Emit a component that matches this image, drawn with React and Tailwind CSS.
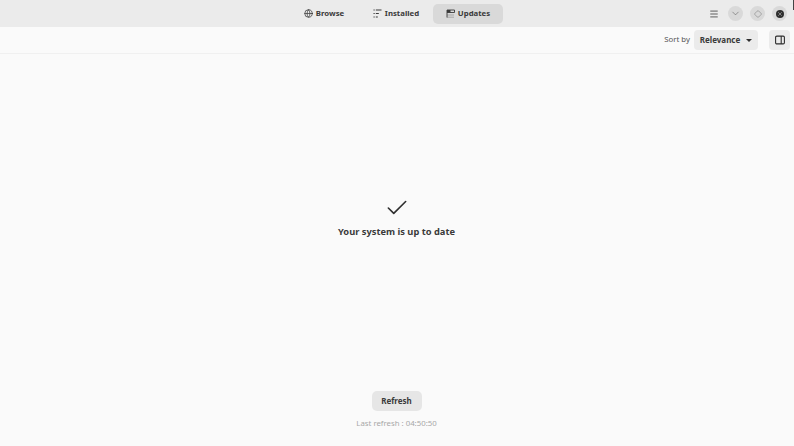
import { Check, ChevronDown, Diamond, Globe, Menu, X } from "lucide-react";

function InstalledIcon() {
  return (
    <svg width="9" height="9" viewBox="0 0 9 9" className="text-[#3a3a3a]">
      <path d="M0.5 1h1.2M2.8 1h5.7M0.5 4.5h1.2M2.8 4.5h3M0.5 8h1.2M2.8 8h2" stroke="currentColor" strokeWidth="1.1" fill="none" />
    </svg>
  );
}

function UpdatesIcon() {
  return (
    <svg width="9" height="9" viewBox="0 0 9 9" className="text-[#3a3a3a]">
      <path d="M1 8.5V1h7.5v2.5H1" stroke="currentColor" strokeWidth="0.9" fill="none" />
      <path d="M1 1h3.5v2.5H1z" fill="currentColor" />
      <path d="M1 6h7M1 8.2h7" stroke="currentColor" strokeWidth="0.6" opacity="0.5" />
    </svg>
  );
}

function SidebarIcon() {
  return (
    <svg width="10" height="10" viewBox="0 0 10 10" className="text-[#2e2e2e]">
      <rect x="0.6" y="1.1" width="8.8" height="7.8" rx="1.2" stroke="currentColor" strokeWidth="1.1" fill="none" />
      <path d="M6.2 1.1v7.8" stroke="currentColor" strokeWidth="1.1" />
    </svg>
  );
}

function Tab({ icon, label, active }) {
  return (
    <div className={`flex h-[20px] w-[70px] items-center justify-center gap-[3px] rounded-[5px] text-[7.8px] font-bold text-[#3a3a3a] ${active ? "bg-[#d9d9d9]" : ""}`}>
      {icon}
      <span>{label}</span>
    </div>
  );
}

function WindowButton({ children }) {
  return (
    <div className="flex h-[15px] w-[15px] items-center justify-center rounded-full bg-[#d9d9d9]">
      {children}
    </div>
  );
}

export default function App() {
  return (
    <div className="relative flex h-[446px] w-[794px] flex-col overflow-hidden bg-[#fafafa] font-['Noto_Sans',sans-serif] text-[#2e2e2e]">
      <header className="relative flex h-[27px] items-center justify-center bg-[#ebebeb]">
        <div className="flex items-center gap-[2px] pr-[2px]">
          <Tab icon={<Globe size={9} strokeWidth={2} />} label="Browse" />
          <Tab icon={<InstalledIcon />} label="Installed" />
          <Tab icon={<UpdatesIcon />} label="Updates" active />
        </div>
        <div className="absolute right-[7px] top-[6px] flex items-center gap-[7px]">
          <Menu size={10} strokeWidth={1.8} className="mr-[2px]" />
          <WindowButton>
            <ChevronDown size={11} strokeWidth={1.2} className="text-[#555555]" />
          </WindowButton>
          <WindowButton>
            <Diamond size={8} strokeWidth={1.2} className="text-[#555555]" />
          </WindowButton>
          <WindowButton>
            <div className="flex h-[8px] w-[8px] items-center justify-center rounded-full bg-[#2e2e2e]">
              <X size={6} strokeWidth={2} className="text-[#d4d4d4]" />
            </div>
          </WindowButton>
        </div>
      </header>

      <div className="flex h-[27px] items-center justify-end border-b border-[#f0f0f0] bg-[#fafafa] pr-[4px]">
        <span className="mr-[4px] text-[7.8px] text-[#555555]">Sort by</span>
        <div className="flex h-[20px] w-[64px] items-center justify-center gap-[6px] rounded-[4px] bg-[#ebebeb] text-[8px] font-bold text-[#3a3a3a]">
          <span>Relevance</span>
          <span className="h-0 w-0 border-x-[3px] border-t-[3px] border-x-transparent border-t-[#2e2e2e]" />
        </div>
        <div className="ml-[11px] flex h-[20px] w-[21px] items-center justify-center rounded-[4px] bg-[#ebebeb]">
          <SidebarIcon />
        </div>
      </div>

      <main className="flex flex-1 flex-col items-center pr-[1px]">
        <Check size={26} strokeWidth={1.5} className="mt-[141px] text-[#2e2e2e]" />
        <p className="mt-[3px] text-[9.3px] font-bold leading-[16px] text-[#3a3a3a]">Your system is up to date</p>
        <button className="mt-[151px] flex h-[20px] w-[50px] items-center justify-center rounded-[5px] bg-[#e6e6e6] text-[8px] font-bold text-[#3a3a3a]">
          Refresh
        </button>
        <p className="mt-[5px] text-[7.8px] leading-[14px] text-[#a8a8a8]">Last refresh : 04:50:50</p>
      </main>

      <div className="absolute right-0 top-0 h-[10px] w-[1px] bg-[#444444]" />
    </div>
  );
}
